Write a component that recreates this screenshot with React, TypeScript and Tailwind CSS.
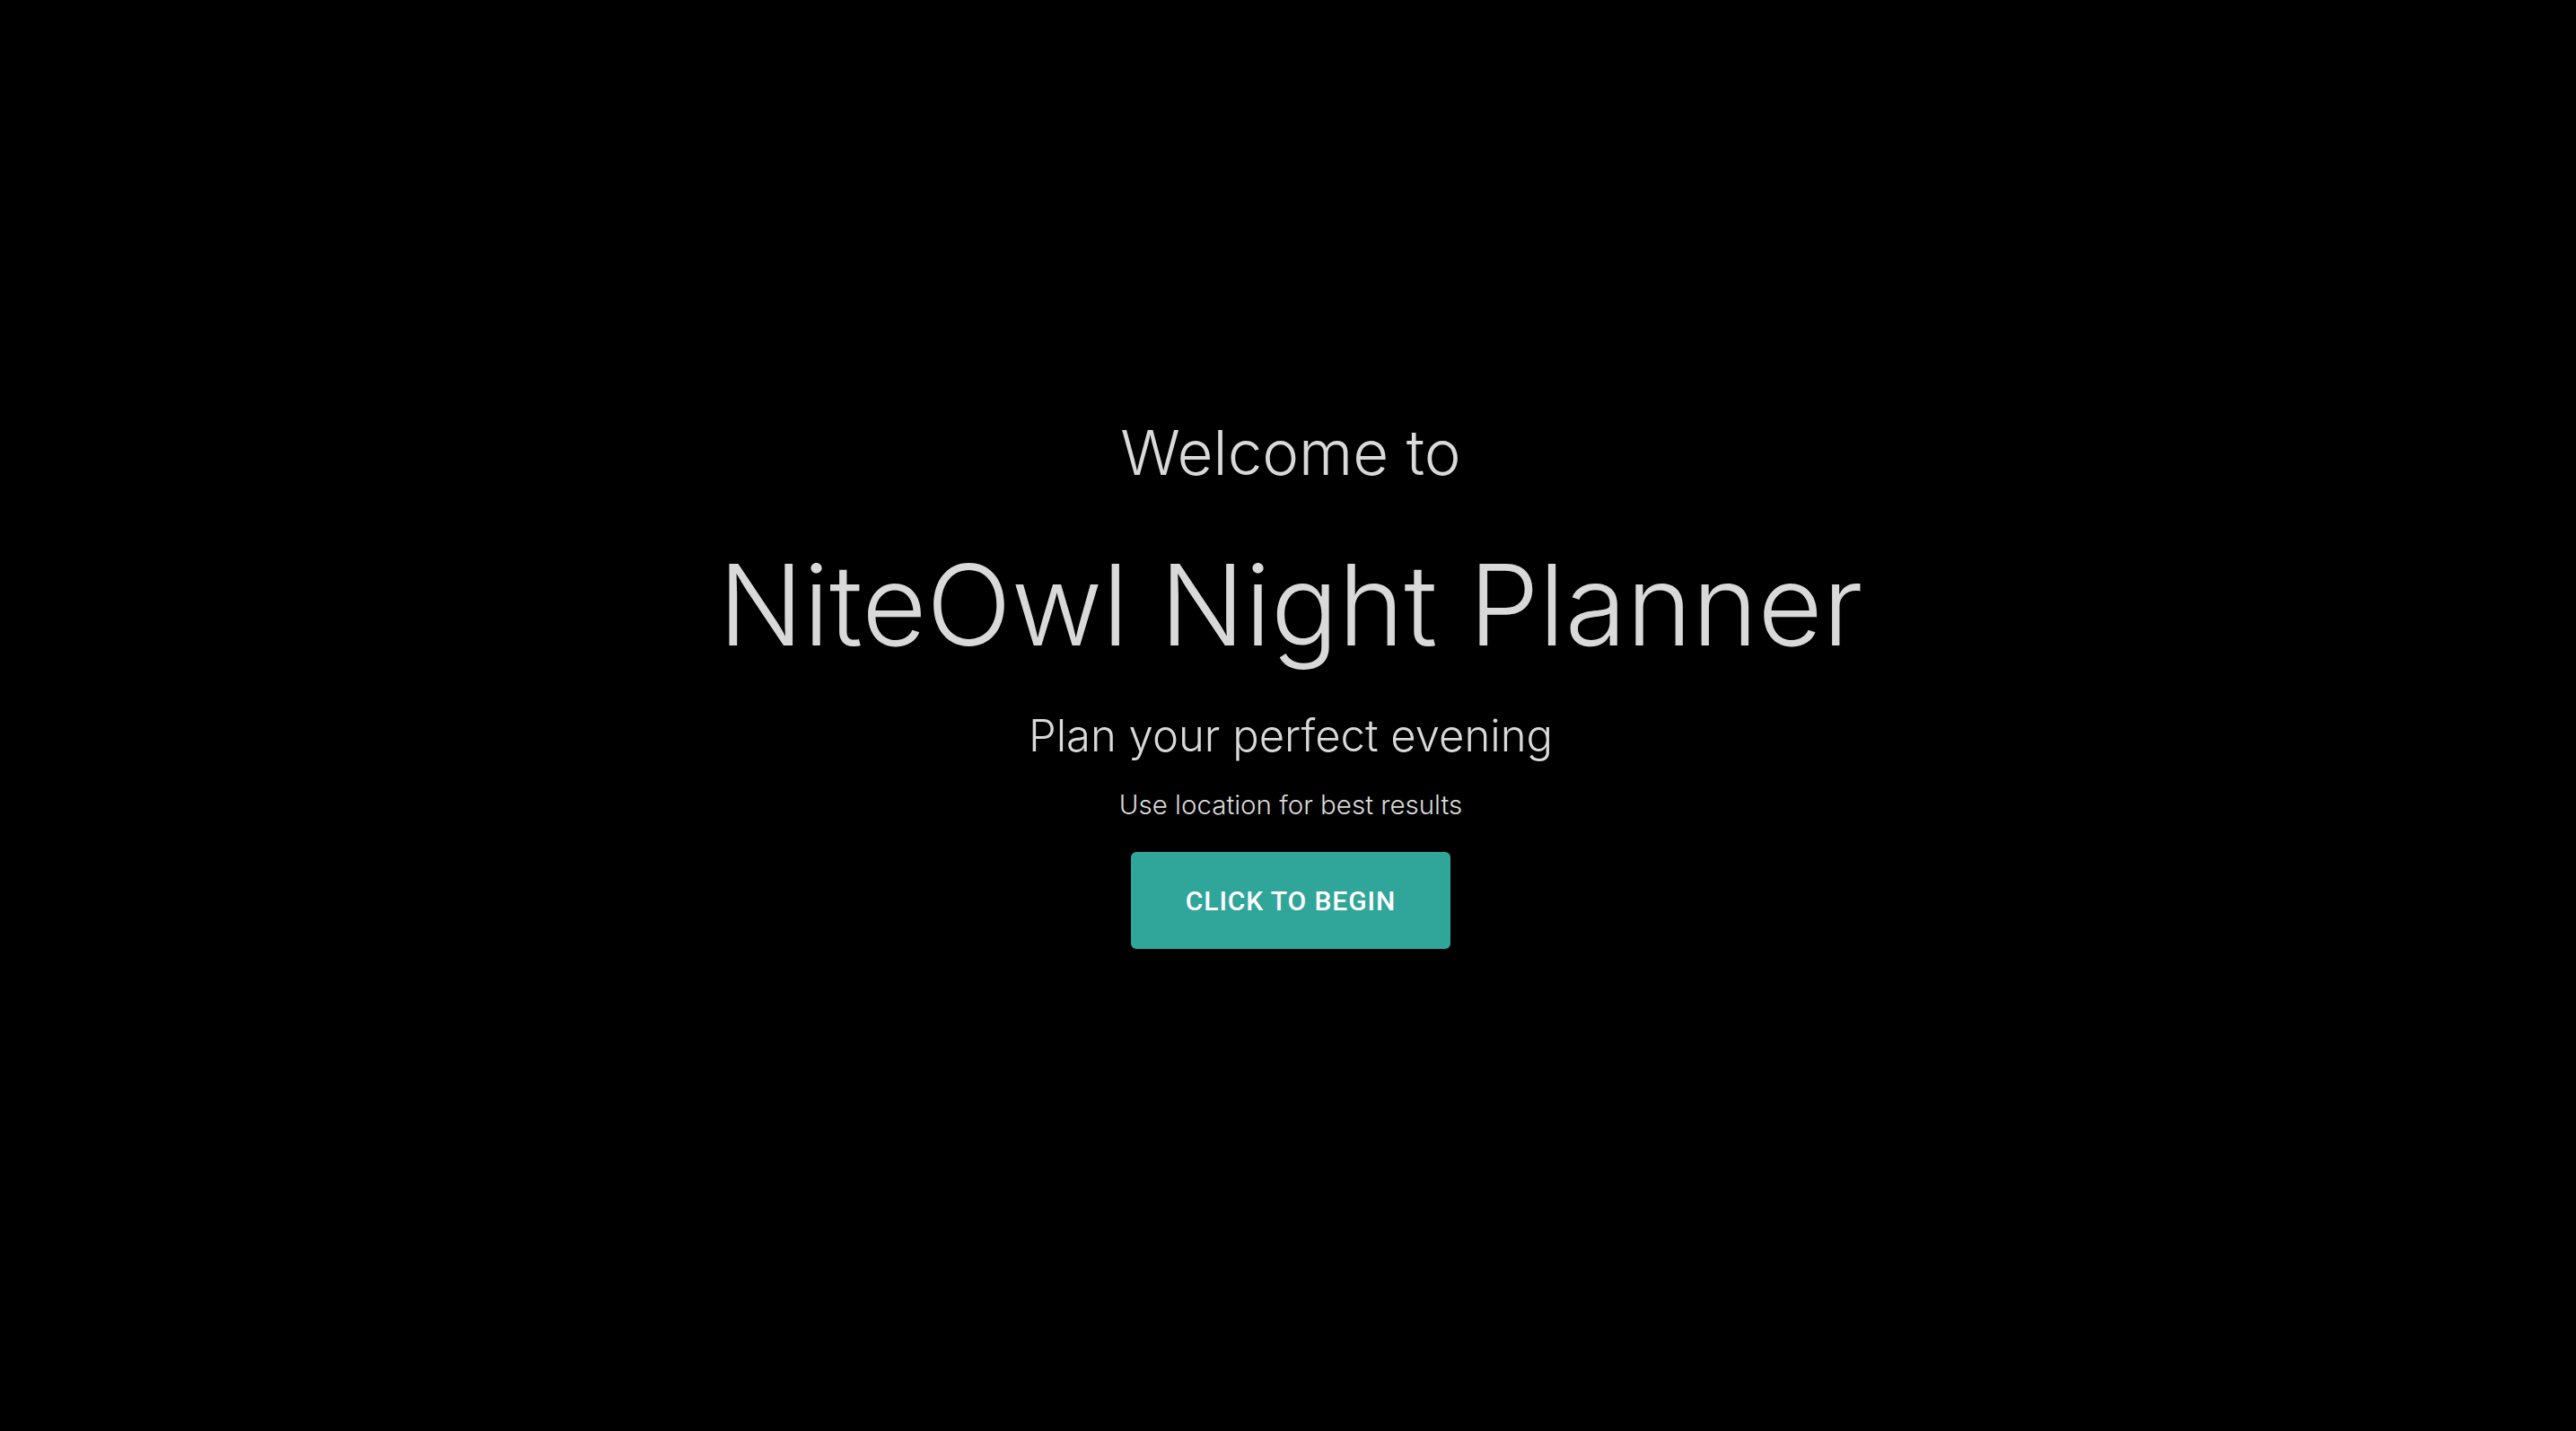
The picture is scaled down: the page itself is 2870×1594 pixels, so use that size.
export default function App() {
  return (
    <div className="min-h-screen w-full bg-black flex flex-col items-center pt-[464px] pl-[6px] text-[#d9d9d9]" style={{ fontFamily: 'Inter, "Noto Sans", sans-serif' }}>
      <div className="text-[69px] leading-[80px] font-light">Welcome to</div>
      <div className="mt-[60px] text-[124.5px] leading-[140px] font-light">NiteOwl Night Planner</div>
      <div className="mt-[48px] text-[49px] leading-[56px] font-light">Plan your perfect evening</div>
      <div className="mt-[31px] text-[29.5px] leading-[34px] font-light">Use location for best results</div>
      <button
        className="mt-[36px] w-[356px] h-[108px] bg-[#30a599] rounded-[6px] text-white text-[30px] font-medium tracking-[0.03em] uppercase"
        style={{ fontFamily: 'Roboto, "Liberation Sans", sans-serif' }}
      >
        Click to begin
      </button>
    </div>
  );
}
